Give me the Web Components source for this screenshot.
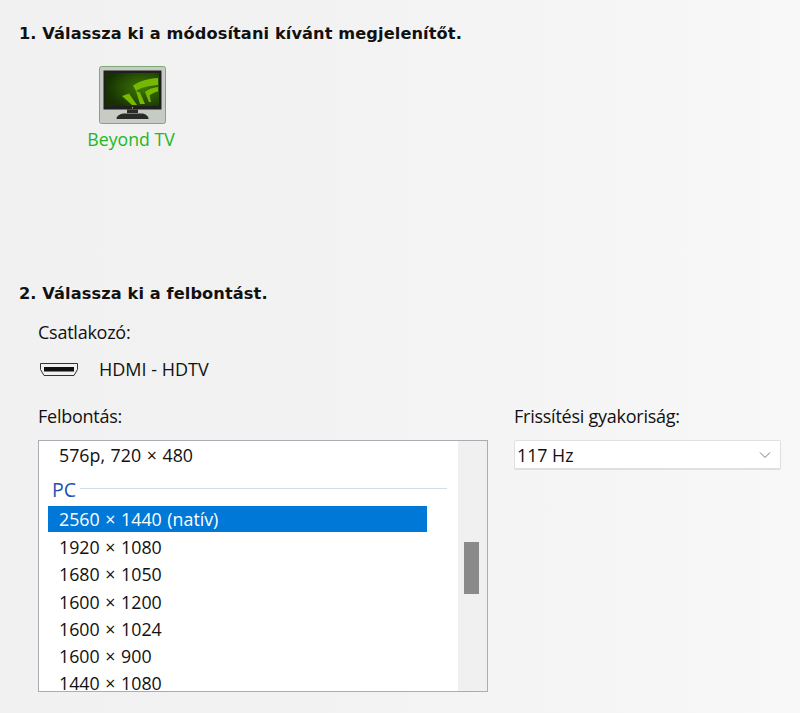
<!DOCTYPE html>
<html lang="hu">
<head>
<meta charset="utf-8">
<style>
  html, body { margin: 0; height: 100%; }
  body {
    width: 800px;
    height: 713px;
    overflow: hidden;
    background: linear-gradient(90deg, #f1f1f1 0%, #f2f2f2 40%, #f8f8f8 100%);
    font-family: "Open Sans", "Noto Sans", sans-serif;
    color: #111;
  }
</style>
</head>
<body>
<display-page></display-page>
<script>
class StepHeading extends HTMLElement {
  constructor () {
    super()
    this.attachShadow({ mode: 'open' }).innerHTML = `
      <style>
        :host { display: block; font: bold 16.2px/20px "DejaVu Sans", sans-serif; color: #111; letter-spacing: .1px; white-space: nowrap; }
      </style>
      <slot></slot>`
  }
}

class DisplayTile extends HTMLElement {
  constructor () {
    super()
    this.attachShadow({ mode: 'open' }).innerHTML = `
      <style>
        :host { display: flex; flex-direction: column; align-items: center; width: 100px; font: 17.700px/22px "Open Sans", sans-serif; color: #1fb71f; }
        svg { display: block; margin: 0 0 3px 4px; }
      </style>
      <svg width="68" height="59" viewBox="0 0 68 59">
        <defs>
          <radialGradient id="scr" cx="70%" cy="45%" r="70%">
            <stop offset="0" stop-color="#3f7a06"/>
            <stop offset="1" stop-color="#163003"/>
          </radialGradient>
        </defs>
        <rect x=".5" y=".5" width="66" height="57" rx="2" fill="#c6cbc3" stroke="#7fa878"/>
        <rect x="4.500" y="4.500" width="58" height="39" fill="#1f1f1f"/>
        <rect x="7" y="7" width="53" height="33" fill="url(#scr)"/>
        <path d="M59 12C49 12.500 41 15 34 19.500L37 25C41 22 48 20 59 19Z" fill="#76b900"/>
        <path d="M37 25L41 26.500L46 38H41Z" fill="#76b900"/>
        <path d="M59 21C53 21.500 49 23.500 46 26L50 36H52L50.500 29.500C53 27.500 56 26 59 25.500Z" fill="#76b900"/>
        <path d="M23 30L30 27.500L38 39H33Z" fill="#76b900"/>
        <path d="M28 43.500H39V47H28Z" fill="#2b2b2b"/>
        <path d="M17.500 53C17.500 50 20 48.500 24 47.500H44C47 48.500 49.500 50 49.500 53Z" fill="#2a2a2a"/>
        <rect x="33" y="41" width="1" height="1.500" fill="#c9b23a"/>
      </svg>
      <slot></slot>`
  }
}

class HdmiIcon extends HTMLElement {
  constructor () {
    super()
    this.attachShadow({ mode: 'open' }).innerHTML = `
      <style>
        :host { display: block; width: 40px; height: 15px; }
        svg { display: block; }
      </style>
      <svg width="40" height="15" viewBox="0 0 40 15">
        <path d="M2.500 1.500H39.500V7.500L36 13.500H6L2.500 7.500Z" fill="none" stroke="#333" stroke-width="1"/>
        <rect x="6" y="5" width="30" height="4.500" fill="#111"/>
      </svg>`
  }
}

class ListRow extends HTMLElement {
  constructor () {
    super()
    this.attachShadow({ mode: 'open' }).innerHTML = `
      <style>
        :host { display: block; height: 27.2px; line-height: 27px; margin-right: 30px; padding-left: 20px; font-size: 17.800px; word-spacing: 1px; white-space: nowrap; color: #111; }
        :host([selected]) { height: 26px; line-height: 27.500px; margin-left: 9px; padding-left: 11px; margin-bottom: 2px; background: #0078d7; color: #fff; }
      </style>
      <slot></slot>`
  }
}

class ListGroup extends HTMLElement {
  constructor () {
    super()
    this.attachShadow({ mode: 'open' }).innerHTML = `
      <style>
        :host { display: flex; align-items: center; gap: 4px; box-sizing: border-box; height: 37px; padding: 4px 10px 0 13px; font-size: 19.500px; color: #1f4fb5; }
        i { flex: 1; height: 1px; background: #d3deec; margin-top: -3px; }
      </style>
      <slot></slot><i></i>`
  }
}

class ListBox extends HTMLElement {
  constructor () {
    super()
    this.attachShadow({ mode: 'open' }).innerHTML = `
      <style>
        :host { display: block; box-sizing: border-box; width: 450px; height: 252px; border: 1px solid #a9adb3; background: #fff; position: relative; overflow: hidden; }
        .rows { width: 418px; padding-top: 1px; }
        .track { position: absolute; top: 0; right: 0; bottom: 0; width: 29px; background: #f0f0f0; }
        .thumb { position: absolute; left: 6px; top: 101px; width: 15px; height: 52px; background: #8a8a8a; }
      </style>
      <div class="rows"><slot></slot></div>
      <div class="track"><div class="thumb"></div></div>`
  }
}

class DropDown extends HTMLElement {
  constructor () {
    super()
    this.attachShadow({ mode: 'open' }).innerHTML = `
      <style>
        :host { display: flex; align-items: center; justify-content: space-between; box-sizing: border-box; width: 267px; height: 30px; padding: 0 9px 0 2px; background: #fff; border: 1px solid #dfdfdf; border-bottom-width: 2px; border-radius: 2px; font-size: 17.800px; color: #111; }
        svg { display: block; }
      </style>
      <slot></slot>
      <svg width="12" height="8" viewBox="0 0 12 8"><path d="M1 1.500L6 6.500L11 1.500" fill="none" stroke="#777" stroke-width="1"/></svg>`
  }
}

class DisplayPage extends HTMLElement {
  constructor () {
    super()
    this.attachShadow({ mode: 'open' }).innerHTML = `
      <style>
        :host { display: block; padding: 24px 0 0 19px; font: 18px/22px "Open Sans", sans-serif; color: #111; }
        display-tile { margin: 22px 0 0 62px; }
        .second { margin-top: 134px; }
        .body { padding-left: 19px; }
        .label { margin-top: 17px; height: 22px; letter-spacing: -.25px; }
        .conn { display: flex; align-items: center; gap: 21px; margin-top: 15px; height: 22px; }
        .grid { display: grid; grid-template-columns: 476px 267px; margin-top: 25px; }
        .grid .label { margin: 0 0 13px; }
      </style>
      <step-heading>1. Válassza ki a módosítani kívánt megjelenítőt.</step-heading>
      <display-tile>Beyond TV</display-tile>
      <step-heading class="second">2. Válassza ki a felbontást.</step-heading>
      <div class="body">
        <div class="label">Csatlakozó:</div>
        <div class="conn"><hdmi-icon></hdmi-icon><span>HDMI - HDTV</span></div>
        <div class="grid">
          <div>
            <div class="label">Felbontás:</div>
            <list-box>
              <list-row>576p, 720 × 480</list-row>
              <list-group>PC</list-group>
              <list-row selected>2560 × 1440 (natív)</list-row>
              <list-row>1920 × 1080</list-row>
              <list-row>1680 × 1050</list-row>
              <list-row>1600 × 1200</list-row>
              <list-row>1600 × 1024</list-row>
              <list-row>1600 × 900</list-row>
              <list-row>1440 × 1080</list-row>
            </list-box>
          </div>
          <div>
            <div class="label">Frissítési gyakoriság:</div>
            <drop-down>117 Hz</drop-down>
          </div>
        </div>
      </div>`
  }
}

customElements.define('step-heading', StepHeading)
customElements.define('display-tile', DisplayTile)
customElements.define('hdmi-icon', HdmiIcon)
customElements.define('list-row', ListRow)
customElements.define('list-group', ListGroup)
customElements.define('list-box', ListBox)
customElements.define('drop-down', DropDown)
customElements.define('display-page', DisplayPage)
</script>
</body>
</html>
